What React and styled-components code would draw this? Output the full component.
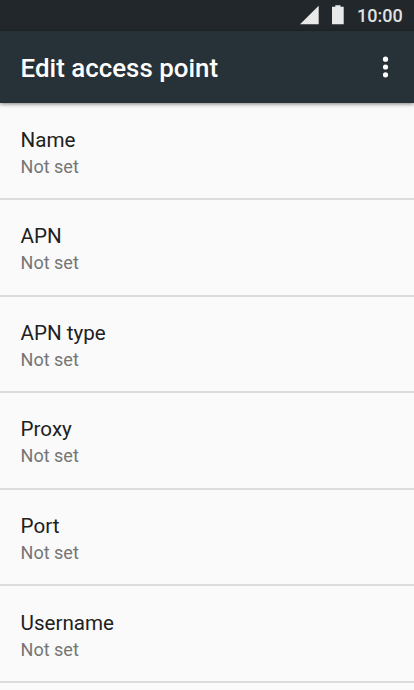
import React from "react";
import styled, { createGlobalStyle } from "styled-components";

const GlobalStyle = createGlobalStyle`
  * { box-sizing: border-box; }
  body { margin: 0; background: #fafafa; font-family: Roboto, sans-serif; overflow: hidden; }
`;
const Screen = styled.div`
  width: 414px;
  height: 690px;
  overflow: hidden;
  display: flex;
  flex-direction: column;
  background: #fafafa;
`;
const StatusBar = styled.div`
  flex: none;
  height: 31px;
  display: flex;
  justify-content: flex-end;
  background: #21272b;
`;
const StatusIcons = styled.svg`
  flex: none;
  display: block;
  width: 56px;
  height: 31px;
  overflow: visible;
`;
const Clock = styled.time`
  width: 57px;
  font-size: 18px;
  font-weight: 500;
  line-height: 32px;
  color: #e0e1e1;
`;
const Toolbar = styled.header`
  flex: none;
  height: 72.4px;
  padding: 0 20px 0 20.6px;
  display: flex;
  align-items: center;
  justify-content: space-between;
  background: #263238;
  box-shadow: 0 1px 4px rgba(0, 0, 0, 0.5);
  z-index: 1;
`;
const Title = styled.h1`
  margin: 0;
  padding-top: 1px;
  font-size: 25.9px;
  font-weight: 500;
  line-height: 32px;
  color: #fff;
`;
const MenuButton = styled.button`
  border: 0;
  padding: 0;
  background: none;
  display: flex;
`;
const List = styled.main`
  flex: none;
`;
const Row = styled.section`
  height: 96.6px;
  padding: 23.3px 20.6px 0;
  border-bottom: 2px solid #dcdcdc;
`;
const Label = styled.div`
  font-size: 20.6px;
  line-height: 26px;
  color: #212121;
`;
const Value = styled.div`
  font-size: 18px;
  line-height: 27px;
  color: #757575;
`;

const fields = ["Name", "APN", "APN type", "Proxy", "Port", "Username"];

export default function App() {
  return (
    <Screen>
      <GlobalStyle />
      <StatusBar>
        <StatusIcons viewBox="0 0 56 31" fill="#e9e9ea">
          <path d="M-1 24.200 17.700 5.800v18.400Z" />
          <path d="M34.300 5.200h5.200v1.500h3.200v17.500H31V6.700h3.300Z" />
        </StatusIcons>
        <Clock>10:00</Clock>
      </StatusBar>
      <Toolbar>
        <Title>Edit access point</Title>
        <MenuButton aria-label="More options">
          <svg width="16" height="24" viewBox="0 0 16 24" fill="#fff">
            <circle cx="7.500" cy="4.200" r="2.600" />
            <circle cx="7.500" cy="12" r="2.600" />
            <circle cx="7.500" cy="19.800" r="2.600" />
          </svg>
        </MenuButton>
      </Toolbar>
      <List>
        {fields.map((name) => (
          <Row key={name}>
            <Label>{name}</Label>
            <Value>Not set</Value>
          </Row>
        ))}
      </List>
    </Screen>
  );
}
